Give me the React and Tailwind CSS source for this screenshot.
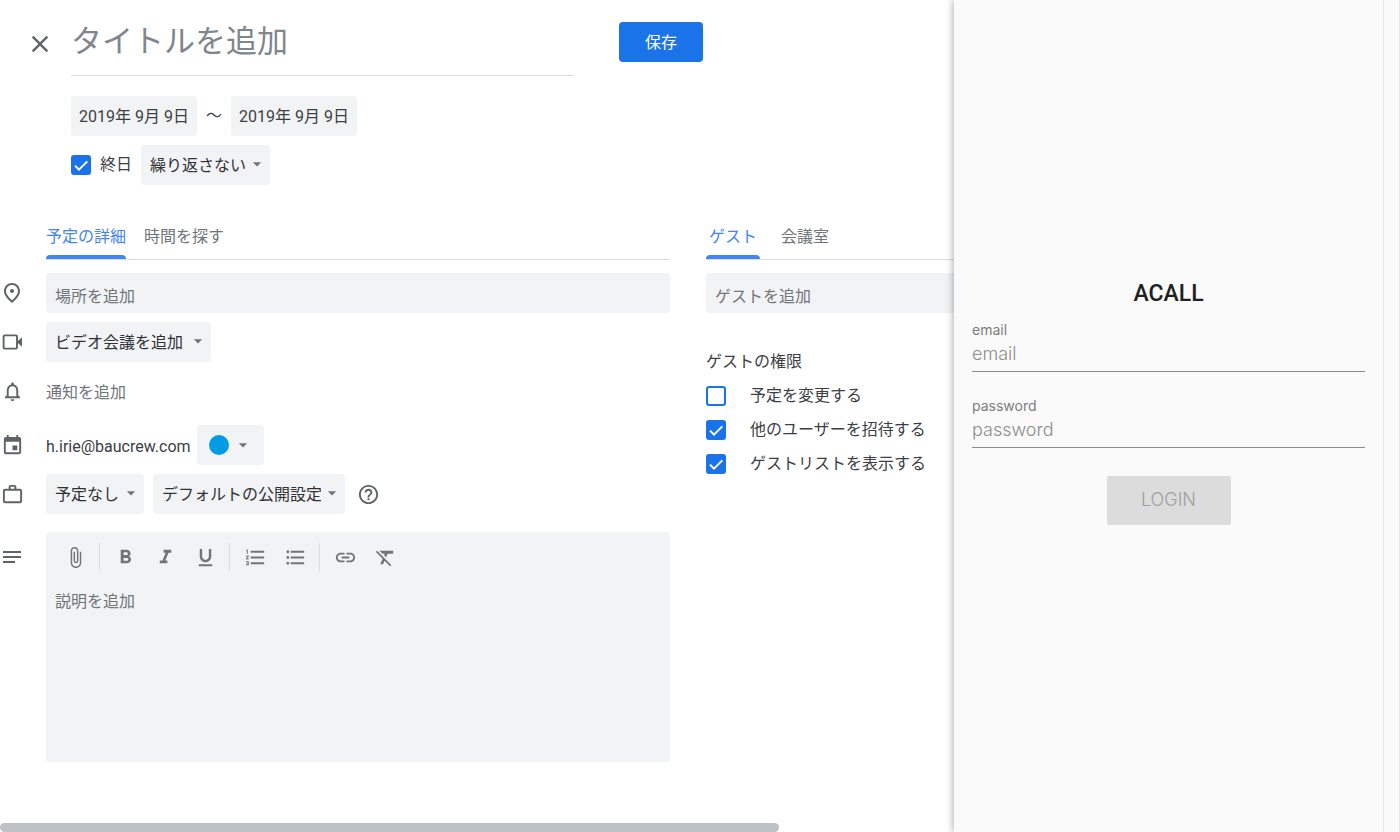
import React, { useState } from 'react';
import {
  MdClose,
  MdOutlinePlace,
  MdNotificationsNone,
  MdEvent,
  MdWorkOutline,
  MdNotes,
  MdAttachFile,
  MdFormatBold,
  MdFormatItalic,
  MdFormatUnderlined,
  MdFormatListNumbered,
  MdFormatListBulleted,
  MdInsertLink,
  MdFormatClear,
  MdHelpOutline,
  MdArrowDropDown
} from 'react-icons/md';

const TOOLBAR = [
  [{ label: 'ファイルを添付', icon: MdAttachFile }],
  [
    { label: '太字', icon: MdFormatBold },
    { label: '斜体', icon: MdFormatItalic },
    { label: '下線', icon: MdFormatUnderlined }
  ],
  [
    { label: '番号付きリスト', icon: MdFormatListNumbered },
    { label: '箇条書き', icon: MdFormatListBulleted }
  ],
  [
    { label: 'リンクを挿入', icon: MdInsertLink },
    { label: '書式をクリア', icon: MdFormatClear }
  ]
];

const PERMISSIONS = [
  { id: 'modify', label: '予定を変更する' },
  { id: 'invite', label: '他のユーザーを招待する' },
  { id: 'seeGuests', label: 'ゲストリストを表示する' }
];

function VideoIcon() {
  return (
    <svg width="24" height="24" viewBox="0 0 24 24" fill="none" aria-hidden="true">
      <rect x="3.6" y="5.4" width="13.4" height="13.2" rx="1" stroke="currentColor" strokeWidth="1.9" />
      <path d="M17.5 11.2 22 7.2v9.6l-4.5-4z" fill="currentColor" />
    </svg>
  );
}

function Select({ label, value, className }) {
  return (
    <div className={`relative h-10 ${className}`}>
      <select aria-label={label} className="appearance-none w-full h-full pl-[9px] pr-6 pt-0.5 rounded bg-[#f1f3f4] text-[#303134] outline-none cursor-pointer">
        <option>{value}</option>
      </select>
      <MdArrowDropDown size={20} className="absolute right-[3px] top-[9px] text-[#70757a] pointer-events-none" />
    </div>
  );
}

function Checkbox({ id, checked, onChange }) {
  return (
    <span className="relative w-5 h-5 shrink-0">
      <input
        id={id}
        type="checkbox"
        checked={checked}
        onChange={onChange}
        className="block appearance-none w-5 h-5 rounded-[3px] border-2 border-[#1a73e8] checked:bg-[#1a73e8] cursor-pointer"
      />
      {checked && (
        <svg viewBox="0 0 20 20" className="absolute inset-0 w-5 h-5 pointer-events-none" fill="none" stroke="#fff" strokeWidth="2">
          <path d="M4 10.6 8 14.6 16.3 6.4" />
        </svg>
      )}
    </span>
  );
}

function Row({ icon, children, className = '' }) {
  return (
    <div className={`flex items-center ${className}`}>
      <div className="w-[46px] shrink-0 text-[#5f6368]">
        <div className="w-6 flex justify-center">{icon}</div>
      </div>
      {children}
    </div>
  );
}

function LoginField({ id, type, value, onChange }) {
  return (
    <div className="flex flex-col">
      <label htmlFor={id} className="text-sm leading-5 text-[#7d7d7d]">{id}</label>
      <input
        id={id}
        type={type}
        value={value}
        onChange={onChange}
        placeholder={id}
        className="h-8 pb-1 text-lg font-light text-[#333] placeholder:text-[#8c8c8c] border-b border-[#8c8c8c] outline-none bg-transparent"
      />
    </div>
  );
}

export default function App() {
  const [title, setTitle] = useState('');
  const [allDay, setAllDay] = useState(true);
  const [permissions, setPermissions] = useState({ modify: false, invite: true, seeGuests: true });
  const [email, setEmail] = useState('');
  const [password, setPassword] = useState('');

  const togglePermission = (id) => {
    setPermissions((prev) => ({ ...prev, [id]: !prev[id] }));
  };

  return (
    <div className="flex h-screen overflow-hidden bg-white text-base text-[#3c4043] font-['Roboto','Noto_Sans_CJK_JP',sans-serif]">
      <main className="flex-1 min-w-0 overflow-hidden flex flex-col">
        <div className="min-w-[1166px]">
          <header className="flex items-start pl-[26px]">
            <button type="button" aria-label="閉じる" className="w-7 mt-[30px] text-[#5f6368] cursor-pointer">
              <MdClose size={28} />
            </button>
            <input
              aria-label="タイトル"
              value={title}
              onChange={(e) => setTitle(e.target.value)}
              placeholder="タイトルを追加"
              className="ml-[17px] w-[503px] h-[76px] pt-3 pb-1 text-[31px] placeholder:text-[#80868b] border-b border-[#dadce0] outline-none"
            />
            <button type="button" className="ml-[45px] mt-[22px] w-[84px] h-10 pt-0.5 rounded bg-[#1a73e8] text-white cursor-pointer">
              保存
            </button>
          </header>

          <div className="pl-[71px] pt-5 flex flex-col gap-[9px]">
            <div className="flex items-center">
              <button type="button" className="w-[126px] h-10 pt-0.5 rounded bg-[#f1f3f4] cursor-pointer">2019年 9月 9日</button>
              <span className="w-[34px] text-center">〜</span>
              <button type="button" className="w-[126px] h-10 pt-0.5 rounded bg-[#f1f3f4] cursor-pointer">2019年 9月 9日</button>
            </div>
            <div className="flex items-center">
              <Checkbox id="all-day" checked={allDay} onChange={() => setAllDay(!allDay)} />
              <label htmlFor="all-day" className="ml-[9px] mr-[9px] cursor-pointer">終日</label>
              <Select label="繰り返し" value="繰り返さない" className="w-[129px]" />
            </div>
          </div>

          <div className="flex gap-9 mt-7">
            <section className="w-[670px] shrink-0">
              <div role="tablist" className="flex gap-[18px] ml-[46px] border-b border-[#dadce0]">
                <button type="button" role="tab" aria-selected="true" className="relative h-[46px] pt-0.5 text-[#4285f4] cursor-pointer">
                  予定の詳細
                  <span className="absolute inset-x-0 bottom-0 h-1 rounded-t bg-[#4285f4]" />
                </button>
                <button type="button" role="tab" aria-selected="false" className="h-[46px] pt-0.5 text-[#70757a] cursor-pointer">時間を探す</button>
              </div>

              <Row className="mt-[13px]" icon={<MdOutlinePlace size={26} />}>
                <input aria-label="場所" placeholder="場所を追加" className="flex-1 h-10 px-[9px] pt-1.5 rounded bg-[#f1f3f4] placeholder:text-[#70757a] outline-none" />
              </Row>
              <Row className="mt-[9px]" icon={<VideoIcon />}>
                <Select label="ビデオ会議" value="ビデオ会議を追加" className="w-[165px]" />
              </Row>
              <Row className="mt-2 h-[42px]" icon={<MdNotificationsNone size={23} />}>
                <button type="button" className="pt-1 text-[#70757a] cursor-pointer">通知を追加</button>
              </Row>
              <Row className="mt-[13px]" icon={<MdEvent size={23} />}>
                <span className="pt-1">h.irie@baucrew.com</span>
                <button type="button" aria-label="予定の色" className="ml-1.5 w-[67px] h-10 pl-3 flex items-center gap-1 rounded bg-[#f1f3f4] text-[#70757a] cursor-pointer">
                  <span className="w-5 h-5 rounded-full bg-[#039be5]" />
                  <MdArrowDropDown size={20} />
                </button>
              </Row>
              <Row className="mt-[9px]" icon={<MdWorkOutline size={23} />}>
                <Select label="予定の有無" value="予定なし" className="w-[98px]" />
                <Select label="公開設定" value="デフォルトの公開設定" className="ml-[9px] w-[192px]" />
                <button type="button" aria-label="ヘルプ" className="ml-3 text-[#5f6368] cursor-pointer">
                  <MdHelpOutline size={23} />
                </button>
              </Row>

              <div className="flex items-start mt-[18px]">
                <div className="w-[46px] h-[50px] shrink-0 flex items-center text-[#5f6368]">
                  <MdNotes size={24} />
                </div>
                <div className="flex-1 h-[230px] px-[9px] flex flex-col rounded bg-[#f1f3f4]">
                  <div className="flex items-center h-[50px] text-[#70757a]">
                    {TOOLBAR.map((group, i) => (
                      <React.Fragment key={i}>
                        {i > 0 && <span className="ml-1 mr-[5px] w-px h-7 bg-[#dadce0]" />}
                        {group.map(({ label, icon: Icon }) => (
                          <button key={label} type="button" aria-label={label} className="w-10 h-10 flex items-center justify-center cursor-pointer">
                            <Icon size={23} />
                          </button>
                        ))}
                      </React.Fragment>
                    ))}
                  </div>
                  <textarea aria-label="説明" placeholder="説明を追加" className="flex-1 pt-2 resize-none bg-transparent placeholder:text-[#70757a] outline-none" />
                </div>
              </div>
            </section>

            <section className="flex-1">
              <div role="tablist" className="flex gap-[18px] border-b border-[#dadce0]">
                <button type="button" role="tab" aria-selected="true" className="relative h-[46px] px-[3px] pt-0.5 text-[#4285f4] cursor-pointer">
                  ゲスト
                  <span className="absolute inset-x-0 bottom-0 h-1 rounded-t bg-[#4285f4]" />
                </button>
                <button type="button" role="tab" aria-selected="false" className="h-[46px] px-[3px] pt-0.5 text-[#70757a] cursor-pointer">会議室</button>
              </div>
              <input aria-label="ゲスト" placeholder="ゲストを追加" className="block mt-[13px] w-full h-10 px-[9px] pt-1.5 rounded bg-[#f1f3f4] placeholder:text-[#70757a] outline-none" />

              <h2 className="mt-[37px]">ゲストの権限</h2>
              <div className="mt-[9px] flex flex-col gap-[9px]">
                {PERMISSIONS.map((p) => (
                  <div key={p.id} className="flex items-center">
                    <Checkbox id={p.id} checked={permissions[p.id]} onChange={() => togglePermission(p.id)} />
                    <label htmlFor={p.id} className="ml-6 pt-px cursor-pointer">{p.label}</label>
                  </div>
                ))}
              </div>
            </section>
          </div>
        </div>

        {/* horizontal scroll bar */}
        <div className="mt-auto h-[9px] pr-[175px]">
          <div className="h-full rounded-full bg-[#bdc1c6]" />
        </div>
      </main>

      <aside className="relative z-10 w-[446px] shrink-0 flex bg-[#fafafa] shadow-[0_0_8px_rgba(0,0,0,0.4)] font-['Inter','Noto_Sans_CJK_JP',sans-serif]">
        <form className="flex-1 px-[18px] pb-7 flex flex-col justify-center" onSubmit={(e) => e.preventDefault()}>
          <h1 className="mb-3 text-center text-[23px] leading-7 font-medium text-[#212121] font-['Roboto',sans-serif]">ACALL</h1>
          <div className="flex flex-col gap-6">
            <LoginField id="email" type="email" value={email} onChange={(e) => setEmail(e.target.value)} />
            <LoginField id="password" type="password" value={password} onChange={(e) => setPassword(e.target.value)} />
          </div>
          <button type="submit" disabled={!email || !password} className="mt-7 self-center w-[124px] h-[49px] rounded-xs bg-[#dcdcdc] text-lg font-light text-[#a0a0a0]">
            LOGIN
          </button>
        </form>
        <div className="w-[17px] border-x border-[#e8e8e8]" />
      </aside>
    </div>
  );
}
